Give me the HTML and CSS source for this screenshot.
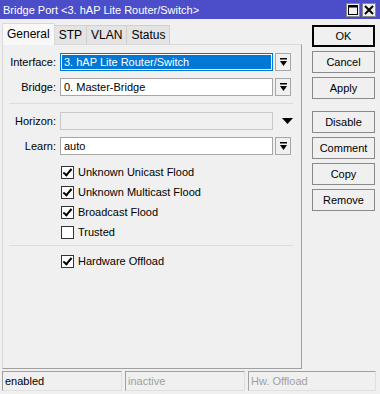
FILE: index.html
```html
<!DOCTYPE html>
<html lang="en">
<head>
    <meta charset="UTF-8">
    <title>Bridge Port</title>
    <link rel="stylesheet" href="styles.css">
</head>
<body>
<div class="window">

    <!-- Title Bar -->
    <div class="titlebar">
        <span class="title">Bridge Port &lt;3. hAP Lite Router/Switch&gt;</span>
        <div class="win-btns">
            <span class="win-btn">
                <svg width="12" height="12" viewBox="0 0 12 12"><rect x="1.5" y="1.5" width="9" height="9" fill="none" stroke="#000" stroke-width="1"/><line x1="1" y1="2.5" x2="11" y2="2.5" stroke="#000" stroke-width="2"/></svg>
            </span>
            <span class="win-btn">
                <svg width="12" height="12" viewBox="0 0 12 12"><path d="M2 2 L10 10 M10 2 L2 10" stroke="#000" stroke-width="2"/></svg>
            </span>
        </div>
    </div>

    <div class="content">
        <div class="main">
            <div class="tabs">
                <span class="tab active">General</span>
                <span class="tab">STP</span>
                <span class="tab">VLAN</span>
                <span class="tab">Status</span>
            </div>

            <div class="panel">
                <div class="row">
                    <label>Interface:</label>
                    <span class="field selected">3. hAP Lite Router/Switch</span>
                    <span class="drop">
                        <svg width="9" height="9" viewBox="0 0 9 9"><rect x="1" y="0" width="7" height="1.5" fill="#000"/><path d="M1 3 H8 L4.5 8 Z" fill="#000"/></svg>
                    </span>
                </div>
                <div class="row">
                    <label>Bridge:</label>
                    <span class="field">0. Master-Bridge</span>
                    <span class="drop">
                        <svg width="9" height="9" viewBox="0 0 9 9"><rect x="1" y="0" width="7" height="1.5" fill="#000"/><path d="M1 3 H8 L4.5 8 Z" fill="#000"/></svg>
                    </span>
                </div>

                <div class="sep"></div>

                <div class="row">
                    <label>Horizon:</label>
                    <span class="field disabled"></span>
                    <span class="arrow">
                        <svg width="11" height="7" viewBox="0 0 11 7"><path d="M0 0 H11 L5.5 6 Z" fill="#000"/></svg>
                    </span>
                </div>
                <div class="row">
                    <label>Learn:</label>
                    <span class="field">auto</span>
                    <span class="drop">
                        <svg width="9" height="9" viewBox="0 0 9 9"><rect x="1" y="0" width="7" height="1.5" fill="#000"/><path d="M1 3 H8 L4.5 8 Z" fill="#000"/></svg>
                    </span>
                </div>

                <div class="checks">
                    <div class="check"><span class="box on"></span>Unknown Unicast Flood</div>
                    <div class="check"><span class="box on"></span>Unknown Multicast Flood</div>
                    <div class="check"><span class="box on"></span>Broadcast Flood</div>
                    <div class="check"><span class="box"></span>Trusted</div>
                </div>

                <div class="sep sep-low"></div>

                <div class="checks checks-last">
                    <div class="check"><span class="box on"></span>Hardware Offload</div>
                </div>
            </div>
        </div>

        <!-- Action Buttons -->
        <div class="actions">
            <button class="btn btn-default">OK</button>
            <button class="btn">Cancel</button>
            <button class="btn">Apply</button>
            <button class="btn btn-gap">Disable</button>
            <button class="btn">Comment</button>
            <button class="btn">Copy</button>
            <button class="btn">Remove</button>
        </div>
    </div>

    <!-- Status Bar -->
    <div class="statusbar">
        <span class="status">enabled</span>
        <span class="status dim">inactive</span>
        <span class="status dim">Hw. Offload</span>
    </div>
</div>
</body>
</html>
```

FILE: styles.css
```css
/* General Styling */
body {
    margin: 0;
    padding: 0;
    font-family: 'Liberation Sans', Arial, sans-serif;
    font-size: 11px;
    color: #000;
    background: #f0f0f0;
}

.window {
    width: 380px;
    height: 394px;
    background: #f0f0f0;
    display: flex;
    flex-direction: column;
}

/* Title Bar */
.titlebar {
    height: 19px;
    background: #4c4ec9;
    color: #fff;
    display: flex;
    align-items: center;
    justify-content: space-between;
    padding: 0 4px 0 3px;
    font-size: 11px;
}

.win-btns {
    display: flex;
    gap: 2px;
}

.win-btn {
    width: 14px;
    height: 14px;
    background: #f0f0f0;
    border: 1px solid #888;
    box-sizing: border-box;
    display: flex;
    align-items: center;
    justify-content: center;
}

/* Content */
.content {
    display: flex;
    flex: 1;
    padding: 3px 0 0 2px;
}

.main {
    width: 300px;
    display: flex;
    flex-direction: column;
}

/* Tabs */
.tabs {
    display: flex;
    align-items: flex-end;
    height: 22px;
}

.tab {
    height: 19px;
    padding: 0 4px;
    border: 1px solid #d0d0d0;
    border-bottom: none;
    background: #e4e4e4;
    font-size: 12px;
    line-height: 19px;
    box-sizing: border-box;
    margin-right: -1px;
}

.tab.active {
    height: 22px;
    background: #f8f8f8;
    border-color: #d9d9d9;
    padding: 0 4px;
    line-height: 21px;
    position: relative;
    top: 1px;
}

.panel {
    flex: 1;
    border: 1px solid #d9d9d9;
    border-right-color: #a0a0a0;
    border-bottom-color: #a0a0a0;
    background: #f0f0f0;
    padding-top: 8px;
    margin-bottom: 2px;
}

/* Form Rows */
.row {
    display: flex;
    align-items: center;
    height: 18px;
    margin-bottom: 7px;
}

.row label {
    width: 53px;
    text-align: right;
    font-size: 11px;
    padding-right: 4px;
}

.field {
    width: 213px;
    height: 18px;
    box-sizing: border-box;
    border: 1px solid #a7a7a7;
    background: #fff;
    padding-left: 3px;
    line-height: 16px;
    font-size: 11px;
}

.field.selected {
    background: #0078d7;
    border-color: #0078d7;
    color: #fff;
    box-shadow: inset 0 0 0 1px #fff;
}

.field.disabled {
    background: #f0f0f0;
    border-color: #c8c8c8;
}

.drop {
    width: 16px;
    height: 18px;
    margin-left: 2px;
    box-sizing: border-box;
    border: 1px solid #a7a7a7;
    background: #f0f0f0;
    display: flex;
    align-items: center;
    justify-content: center;
}

.arrow {
    width: 16px;
    margin-left: 6px;
    display: flex;
    justify-content: center;
}

.sep {
    height: 1px;
    background: #dcdcdc;
    margin: 3px 8px 8px 6px;
}

.sep-low {
    margin-bottom: 4px;
}

/* Checkboxes */
.checks {
    padding-left: 58px;
    margin-top: 6px;
    margin-bottom: 2px;
}

.checks-last {
    margin-top: 5px;
}

.check {
    display: flex;
    align-items: center;
    height: 20px;
    font-size: 11px;
}

.box {
    width: 13px;
    height: 13px;
    box-sizing: border-box;
    border: 1px solid #333;
    background: #fff;
    margin-right: 4px;
    position: relative;
}

.box.on::after {
    content: "";
    position: absolute;
    left: 3px;
    top: 0px;
    width: 3px;
    height: 7px;
    border: solid #000;
    border-width: 0 2px 2px 0;
    transform: rotate(40deg);
}

/* Buttons */
.actions {
    display: flex;
    flex-direction: column;
    gap: 4px;
    padding: 0 0 0 10px;
    margin-top: 3px;
}

.btn {
    width: 63px;
    height: 22px;
    font-family: 'Liberation Sans', Arial, sans-serif;
    font-size: 11px;
    background: #f0f0f0;
    border: 1px solid #8a8a8a;
    padding: 0;
    color: #000;
}

.btn-default {
    border: 2px solid #000;
}

.btn-gap {
    margin-top: 8px;
}

/* Status Bar */
.statusbar {
    display: flex;
    gap: 3px;
    padding: 0 2px 3px 2px;
}

.status {
    height: 20px;
    width: 120px;
    box-sizing: border-box;
    border: 1px solid #a0a0a0;
    border-right-color: #e0e0e0;
    border-bottom-color: #e0e0e0;
    padding-left: 2px;
    line-height: 18px;
    font-size: 11px;
}

.status:last-child {
    width: 128px;
}

.status.dim {
    color: #a0a0a0;
}
```
